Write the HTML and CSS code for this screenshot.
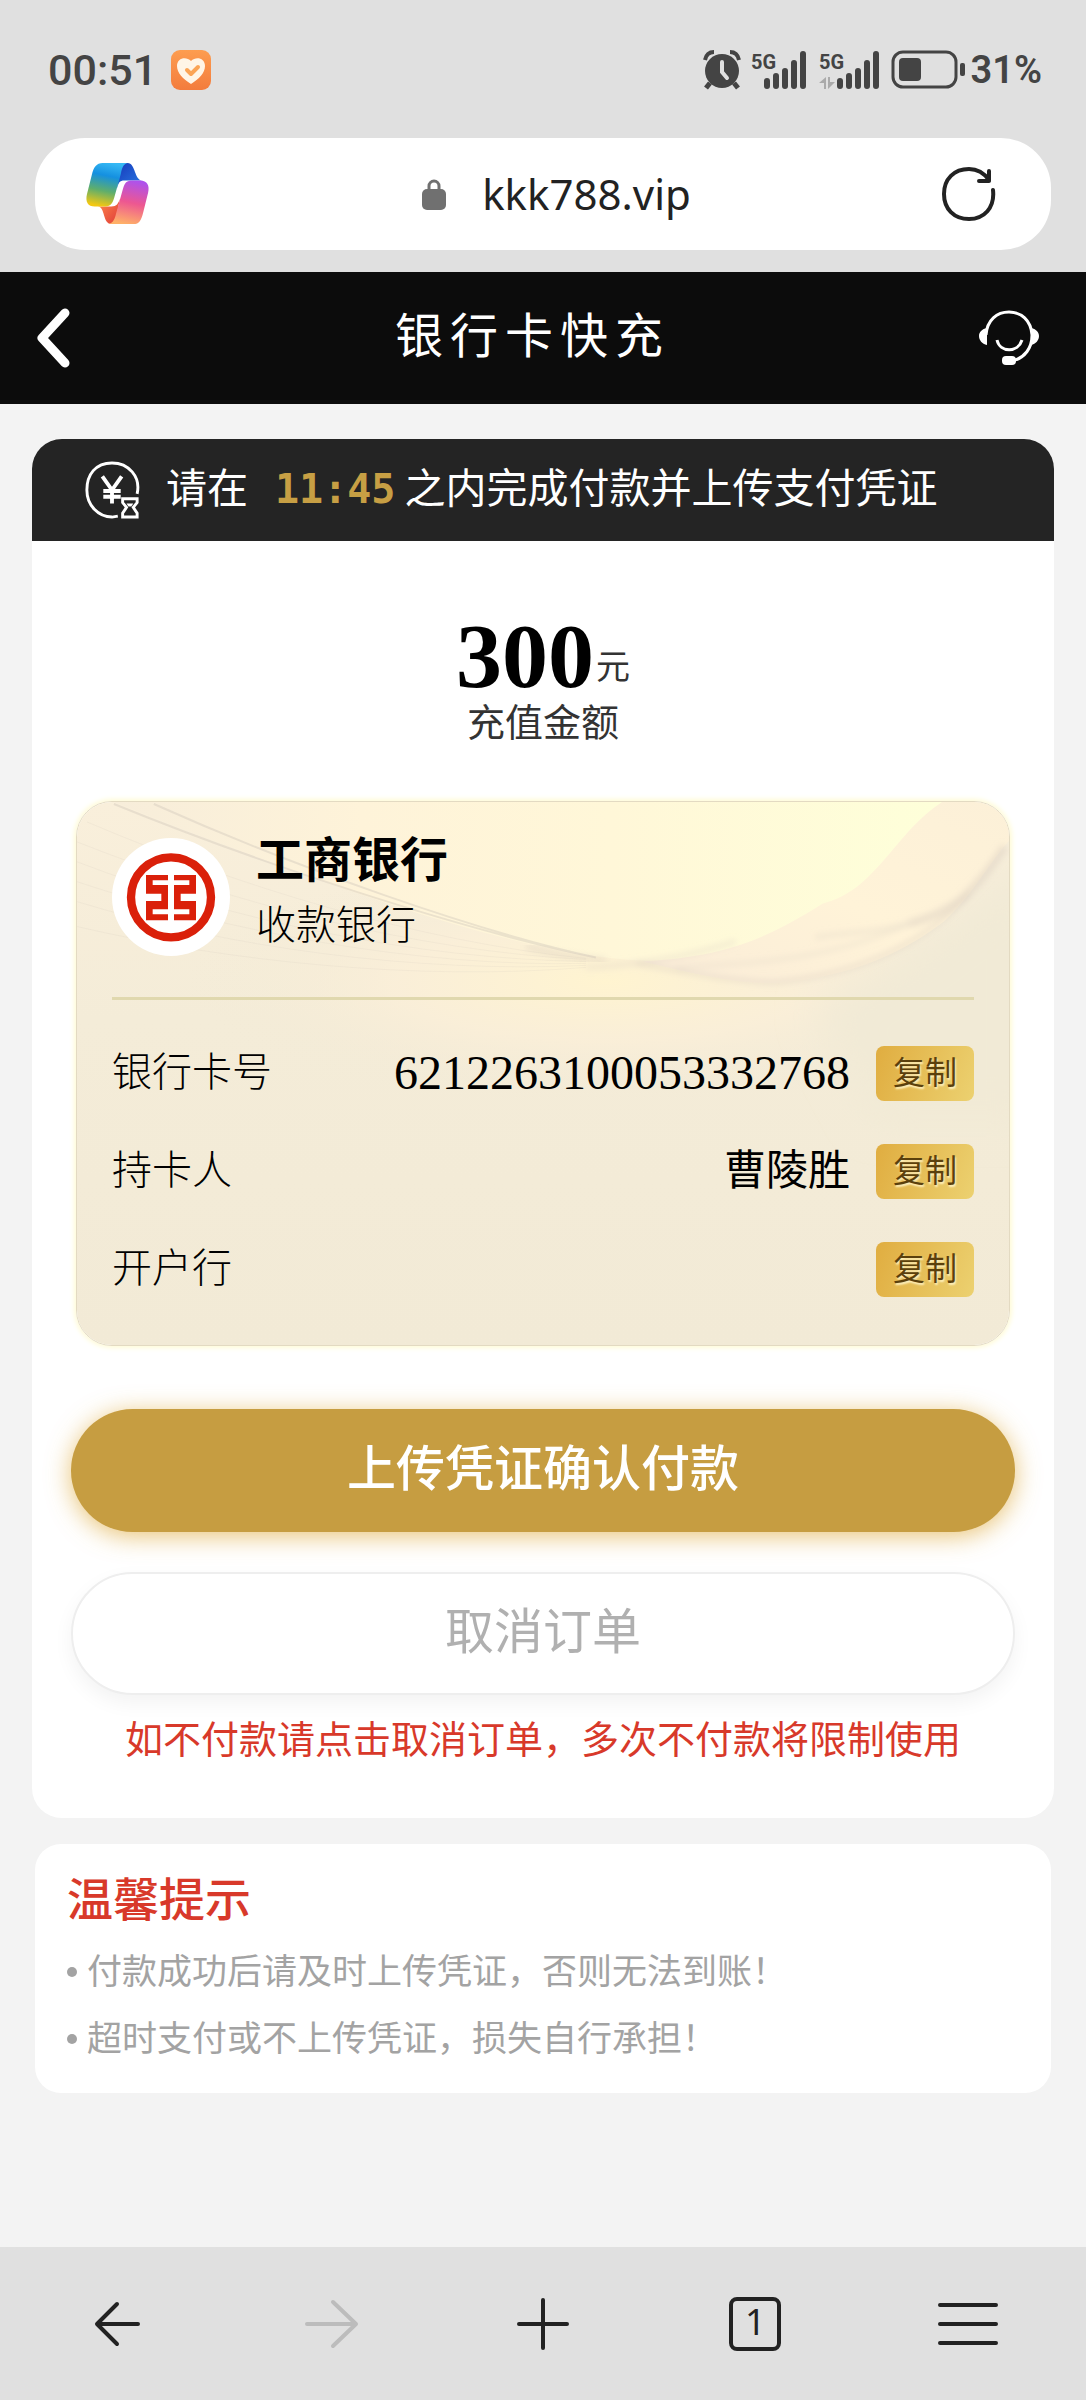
FILE: index.html
```html
<!DOCTYPE html>
<html lang="zh-CN">
<head>
<meta charset="utf-8">
<meta name="viewport" content="width=device-width, initial-scale=1">
<title>银行卡快充</title>
<link rel="stylesheet" href="styles.css">
</head>
<body>
<div class="chrome">
  <div class="status">
    <div class="status-side">
      <span class="clock">00:51</span>
      <svg width="40" height="40" viewBox="0 0 40 40" aria-hidden="true">
        <defs>
          <linearGradient id="app" x1="0" y1="0" x2="0" y2="1"><stop offset="0" stop-color="#fd9d50"/><stop offset="1" stop-color="#f37c3d"/></linearGradient>
        </defs>
        <rect width="40" height="40" rx="9" fill="url(#app)"/>
        <path d="M20 34C12 29 6 23 6 16c0-8 9-10 14-5 5-5 14-3 14 5 0 7-6 13-14 18z" fill="#fff5e6"/>
        <path d="M16 20l4 4 7-7" fill="none" stroke="#fba455" stroke-width="4" stroke-linecap="round" stroke-linejoin="round"/>
      </svg>
    </div>
    <div class="status-side status-right">
      <svg class="alarm" width="38" height="40" viewBox="0 0 38 40" aria-hidden="true">
        <circle cx="19" cy="21" r="17" fill="#444"/>
        <path d="M2 10C3 5 6 2 11 2M36 10C35 5 32 2 27 2" fill="none" stroke="#444" stroke-width="4"/>
        <path d="M7 33l-4 5M31 33l4 5" stroke="#444" stroke-width="5"/>
        <path d="M19 12v10l5 6" fill="none" stroke="#e0e0e0" stroke-width="4" stroke-linecap="round"/>
      </svg>
      <svg class="signal" width="58" height="40" viewBox="0 0 58 40" aria-hidden="true">
        <text x="0" y="19" class="net" fill="#444">5G</text>
        <path d="M16 31v5M25 26v10M34 21v15M43 13v23M52 4v32" stroke="#444" stroke-width="6" stroke-linecap="round"/>
      </svg>
      <svg class="signal" width="62" height="40" viewBox="0 0 62 40" aria-hidden="true">
        <text x="0" y="19" class="net" fill="#444">5G</text>
        <path d="M7 27v12H5v-6H0zM9 39V27h2v5h5z" fill="#aaa"/>
        <path d="M21 31v5M30 26v10M39 21v15M48 13v23M57 4v32" stroke="#444" stroke-width="6" stroke-linecap="round"/>
      </svg>
      <svg width="76" height="40" viewBox="0 0 76 40" aria-hidden="true">
        <rect x="2" y="2" width="63" height="35" rx="10" fill="none" stroke="#444" stroke-width="3"/>
        <rect x="8" y="8" width="22" height="23" rx="4" fill="#444"/>
        <rect x="69" y="13" width="5" height="13" rx="2" fill="#444"/>
      </svg>
      <span class="battery">31%</span>
    </div>
  </div>
  <div class="address">
    <svg width="66" height="62" viewBox="0 0 66 64" aria-hidden="true">
      <defs>
        <linearGradient id="c1" x1=".6" y1="0" x2=".4" y2="1"><stop offset="0" stop-color="#35b8f4"/><stop offset=".3" stop-color="#1590e0"/><stop offset=".65" stop-color="#5fae6c"/><stop offset="1" stop-color="#f3c812"/></linearGradient>
        <linearGradient id="c2" x1=".6" y1="0" x2=".4" y2="1"><stop offset="0" stop-color="#ae52ec"/><stop offset=".5" stop-color="#ed5791"/><stop offset="1" stop-color="#ffb168"/></linearGradient>
        <linearGradient id="c3" x1="0" y1="0" x2="1" y2="1"><stop offset="0" stop-color="#1639bb"/><stop offset="1" stop-color="#2a7be4"/></linearGradient>
        <linearGradient id="c4" x1="0" y1="0" x2="1" y2="1"><stop offset="0" stop-color="#ff8a4a"/><stop offset="1" stop-color="#df3a3a"/></linearGradient>
      </defs>
      <path d="M35 0h8c8 0 7 18 15 18H40c-6 0-6 2-8 8z" fill="url(#c3)"/>
      <path d="M30 63h-4c-9 0-6-18-14-18h14c6 0 7-3 9-8z" fill="url(#c4)"/>
      <path d="M17 0h26c-5 1-6 6-7 11l-7 25c-2 7-5 9-11 9H9c-7 0-10-5-8-13L6 12C8 4 11 0 17 0z" fill="url(#c1)"/>
      <path d="M49 63H23c5-1 7-6 8-11l7-25c2-7 4-9 10-9h8c7 0 10 5 8 13l-5 20c-2 8-4 12-10 12z" fill="url(#c2)"/>
    </svg>
    <div class="site">
      <svg width="24" height="31" viewBox="0 0 24 31" aria-hidden="true">
        <rect y="10" width="24" height="21" rx="5" fill="#707070"/>
        <path d="M7 12V7a5 5 0 0 1 10 0v5" fill="none" stroke="#707070" stroke-width="3"/>
      </svg>
      <span>kkk788.vip</span>
    </div>
    <button class="plain" aria-label="刷新">
      <svg width="54" height="54" viewBox="0 0 54 54" aria-hidden="true">
        <path d="M51 23C53 41 42 52 27 52S2 42 2 27 12 2 27 2c9 0 15 4 20 11" fill="none" stroke="#222" stroke-width="4" stroke-linecap="round"/>
        <path d="M47 4v10H37" fill="none" stroke="#222" stroke-width="4" stroke-linecap="round" stroke-linejoin="round"/>
      </svg>
    </button>
  </div>
</div>

<header class="topbar">
  <button class="plain" aria-label="返回">
    <svg width="34" height="60" viewBox="0 0 34 60" aria-hidden="true"><path d="M29 5L6 30l23 25" fill="none" stroke="#fff" stroke-width="9" stroke-linecap="round" stroke-linejoin="round"/></svg>
  </button>
  <h1 class="title">银行卡快充</h1>
  <button class="plain" aria-label="客服">
    <svg width="60" height="56" viewBox="0 0 60 56" aria-hidden="true">
      <path d="M7 25C8 10 18 2 30 2s22 8 23 23c0 13-7 23-20 26" fill="none" stroke="#fff" stroke-width="3"/>
      <path d="M8 18v17C3 34 0 30 0 26s3-7 8-8zM52 18v17c5-1 8-5 8-9s-3-7-8-8z" fill="#fff"/>
      <rect x="23" y="46" width="14" height="9" rx="4" fill="#fff"/>
      <path d="M18 30c3 13 21 13 25 0" fill="none" stroke="#fff" stroke-width="3"/>
    </svg>
  </button>
</header>

<main class="page">
  <section class="order">
    <div class="notice">
      <svg width="56" height="58" viewBox="0 0 56 60" aria-hidden="true">
        <path d="M54 34C58 16 45 2 28 2S2 14 2 30s12 28 26 28l6-1" fill="none" stroke="#fff" stroke-width="3"/>
        <path d="M18 16l10 14 10-14M28 30v14M19 31h18M19 37h18" fill="none" stroke="#fff" stroke-width="4"/>
        <path d="M39 39h15v4l-4 5 4 6v4H39v-4l4-6-4-5z" fill="none" stroke="#fff" stroke-width="3"/>
        <path d="M43 44h7l-2 3h-3z" fill="#fff"/>
      </svg>
      <p class="notice-text">请在<time class="countdown">11:45</time>之内完成付款并上传支付凭证</p>
    </div>

    <div class="order-body">
      <div class="amount">
        <p class="amount-value"><strong>300</strong><span>元</span></p>
        <p class="amount-label">充值金额</p>
      </div>

      <div class="bank">
        <svg class="bank-art" viewBox="0 0 934 545" preserveAspectRatio="none" aria-hidden="true">
          <defs>
            <linearGradient id="base" x1="0" y1="0" x2="0" y2="1"><stop offset="0" stop-color="#f9efdb"/><stop offset=".4" stop-color="#f4ecd8"/><stop offset="1" stop-color="#f2ead6"/></linearGradient>
            <linearGradient id="sky" x1="0" y1="0" x2="1" y2="0"><stop offset="0" stop-color="#f7edda"/><stop offset=".3" stop-color="#fef3d9"/><stop offset=".6" stop-color="#fff7d8"/><stop offset="1" stop-color="#feffd9"/></linearGradient>
            <linearGradient id="wing" x1="1" y1="0" x2="0" y2="1"><stop offset="0" stop-color="#fcf0d8"/><stop offset=".5" stop-color="#fff3d8"/><stop offset="1" stop-color="#faecd8"/></linearGradient>
            <radialGradient id="glow"><stop offset="0" stop-color="#fff4d0"/><stop offset=".5" stop-color="#fbefd8" stop-opacity=".8"/><stop offset="1" stop-color="#f2ead6" stop-opacity="0"/></radialGradient>
            <filter id="soft"><feGaussianBlur stdDeviation="3"/></filter>
            <filter id="softer" x="-50%" y="-50%" width="200%" height="200%"><feGaussianBlur stdDeviation="20"/></filter>
          </defs>
          <rect width="934" height="545" fill="url(#base)"/>
          <ellipse cx="530" cy="180" rx="420" ry="120" fill="url(#glow)"/>
          <path d="M740 206C800 180 890 120 960 39V320H800z" fill="#f1ead6" filter="url(#softer)"/>
          <path d="M37 0C240 80 440 155 567 159S747 120 810 62L867 0z" fill="url(#sky)"/>
          <path d="M867 0C820 30 800 90 747 102 690 138 650 155 567 160c50 12 90 22 133 22C780 175 830 150 870 119 900 90 915 60 934 39V0z" fill="url(#wing)"/>
          <g fill="none" stroke="#dccfc2" filter="url(#soft)">
            <path d="M930 45C900 90 880 110 834 122" stroke-width="8" opacity=".5"/>
            <path d="M834 122C800 132 770 130 740 136" stroke-width="5" opacity=".3"/>
            <path d="M895 92C850 140 790 172 700 181 650 180 610 170 560 162" stroke-width="4" opacity=".5"/>
            <path d="M600 166c90-4 160-10 234-44" stroke-width="4" opacity=".3"/>
            <path d="M510 166c50-2 100-10 150-26" stroke-width="4" opacity=".4"/>
          </g>
          <g fill="none" stroke="#cfc6ba" opacity=".4">
            <path d="M37 2C184 62 384 128 520 156M77 2C220 66 400 130 520 156" stroke-width="2"/>
            <path d="M10 20C160 84 340 140 510 157M0 40C150 100 340 150 510 158M0 60C150 118 340 158 510 160M0 80C150 130 340 166 510 162M0 100C150 146 340 172 510 164M0 125C150 160 340 180 510 166" stroke-width="1" opacity=".4"/>
          </g>
          <path d="M450 145c30 9 55 12 80 14" fill="none" stroke="#c9bdb2" stroke-width="4" opacity=".4" filter="url(#soft)"/>
        </svg>

        <div class="bank-head">
          <span class="bank-logo">
            <svg width="102" height="102" viewBox="0 0 306 306" aria-hidden="true">
              <circle cx="153" cy="154" r="120" fill="none" stroke="#da200a" stroke-width="25"/>
              <path d="M78 87h66v16H98v14h46v73H98v15h46v18H78v-58h46v-22H78zM228 87h-66v16h46v14h-46v73h46v15h-46v18h66v-58h-46v-22h46z" fill="#da200a"/>
            </svg>
          </span>
          <div>
            <h2 class="bank-name">工商银行</h2>
            <p class="bank-role">收款银行</p>
          </div>
        </div>

        <dl class="details">
          <div class="detail">
            <dt>银行卡号</dt>
            <dd><span class="number">6212263100053332768</span><button class="copy">复制</button></dd>
          </div>
          <div class="detail">
            <dt>持卡人</dt>
            <dd><span class="holder">曹陵胜</span><button class="copy">复制</button></dd>
          </div>
          <div class="detail">
            <dt>开户行</dt>
            <dd><button class="copy">复制</button></dd>
          </div>
        </dl>
      </div>

      <button class="action action-primary">上传凭证确认付款</button>
      <button class="action action-cancel">取消订单</button>
      <p class="warning">如不付款请点击取消订单，多次不付款将限制使用</p>
    </div>
  </section>

  <section class="tips">
    <h2 class="tips-title">温馨提示</h2>
    <ul class="tips-list">
      <li>付款成功后请及时上传凭证，否则无法到账！</li>
      <li>超时支付或不上传凭证，损失自行承担！</li>
    </ul>
  </section>
</main>

<nav class="toolbar">
  <button class="plain" aria-label="后退">
    <svg width="56" height="56" viewBox="0 0 56 56" aria-hidden="true"><path d="M48 28H8M27 8L7 28l20 20" fill="none" stroke="#222" stroke-width="4" stroke-linecap="round" stroke-linejoin="round"/></svg>
  </button>
  <button class="plain" aria-label="前进" disabled>
    <svg width="56" height="56" viewBox="0 0 56 56" aria-hidden="true"><path d="M4 28h48M30 6l23 22-23 22" fill="none" stroke="#bcbcbc" stroke-width="4" stroke-linecap="round" stroke-linejoin="round"/></svg>
  </button>
  <button class="plain" aria-label="新建标签页">
    <svg width="56" height="56" viewBox="0 0 56 56" aria-hidden="true"><path d="M28 4v48M4 28h48" stroke="#222" stroke-width="4" stroke-linecap="round"/></svg>
  </button>
  <button class="plain" aria-label="标签页"><span class="tab-count">1</span></button>
  <button class="plain" aria-label="菜单">
    <svg width="60" height="56" viewBox="0 0 60 56" aria-hidden="true"><path d="M2 9h56M2 28h56M2 47h56" stroke="#222" stroke-width="4" stroke-linecap="round"/></svg>
  </button>
</nav>
</body>
</html>
```
FILE: styles.css
```css
* {
  box-sizing: border-box;
}

body {
  margin: 0;
  min-height: 100vh;
  display: flex;
  flex-direction: column;
  background: #f3f3f3;
  color: #000;
  font-family: "Noto Sans CJK SC", sans-serif;
}

h1, h2, p, ul, dl, dd {
  margin: 0;
  padding: 0;
}

button {
  font-family: inherit;
  cursor: pointer;
}

svg {
  display: block;
  flex: none;
}

.plain {
  display: flex;
  align-items: center;
  justify-content: center;
  padding: 0;
  border: 0;
  background: none;
}

/* Browser chrome */
.chrome {
  background: #e0e0e0;
  padding: 46px 35px 22px;
}

.status {
  display: flex;
  justify-content: space-between;
  align-items: center;
  height: 48px;
  margin: 0 9px 44px 13px;
  color: #444;
  font-family: Roboto, "Noto Sans", sans-serif;
}

.status-side {
  display: flex;
  align-items: center;
  gap: 14px;
}

.status-right {
  gap: 0;
}

.alarm {
  margin-right: 10px;
}

.signal {
  margin-right: 10px;
}

.net {
  font: bold 20px Roboto, sans-serif;
}

.clock {
  font-size: 43px;
  font-weight: 500;
}

.battery {
  margin-left: 4px;
  font-size: 38px;
  font-weight: 600;
}

.address {
  display: flex;
  align-items: center;
  justify-content: space-between;
  height: 112px;
  padding: 0 55px 0 50px;
  border-radius: 50px;
  background: #fff;
}

.site {
  display: flex;
  align-items: center;
  gap: 36px;
  padding-left: 20px;
  color: #222;
  font: 42px/56px "Noto Sans", sans-serif;
}

/* Page header */
.topbar {
  display: flex;
  align-items: center;
  justify-content: space-between;
  height: 132px;
  padding: 0 47px 0 36px;
  background: #0c0c0c;
}

.title {
  padding: 0 0 12px 16px;
  color: #fff;
  font-size: 48px;
  font-weight: 400;
  line-height: 64px;
  letter-spacing: 7px;
}

/* Order card */
.page {
  flex: 1;
  padding: 35px 32px;
}

.order {
  border-radius: 30px;
  background: #fff;
  overflow: hidden;
}

.notice {
  display: flex;
  align-items: center;
  gap: 26px;
  height: 102px;
  padding: 0 52px;
  background: #242424;
  color: #fff;
}

.notice-text {
  padding-bottom: 6px;
  font-size: 41px;
  line-height: 56px;
  white-space: nowrap;
}

.countdown {
  padding: 0 9px 0 27px;
  color: #c79f44;
  font: bold 40px/56px "DejaVu Sans Mono", monospace;
}

.order-body {
  padding: 75px 39px 56px;
}

.amount {
  color: #333;
  text-align: center;
}

.amount-value {
  display: flex;
  align-items: flex-end;
  justify-content: center;
  gap: 2px;
  height: 80px;
  font-size: 34px;
  line-height: 62px;
}

.amount-value strong {
  color: #000;
  font: bold 92px/80px "Liberation Serif", serif;
}

.amount-label {
  font-size: 38px;
  line-height: 48px;
}

/* Bank card */
.bank {
  position: relative;
  isolation: isolate;
  margin: 57px 5px 63px;
  padding: 36px 35px 27px;
  border: 1px solid #e3dac2;
  border-radius: 36px;
  overflow: hidden;
  box-shadow: 0 0 5px 2px #fffbd6;
}

.bank-art {
  position: absolute;
  inset: 0;
  z-index: -1;
  width: 100%;
  height: 100%;
}

.bank-head {
  display: flex;
  align-items: flex-start;
  gap: 26px;
  padding-bottom: 41px;
  border-bottom: 3px solid #e0d8ae;
}

.bank-logo {
  display: grid;
  place-items: center;
  width: 118px;
  height: 118px;
  border-radius: 50%;
  background: #fff;
}

.bank-name {
  margin-bottom: 24px;
  font-size: 48px;
  font-weight: 700;
  line-height: 36px;
}

.bank-role {
  font-size: 40px;
  font-weight: 300;
  line-height: 48px;
}

.details {
  padding-top: 24px;
}

.detail {
  display: flex;
  align-items: center;
  justify-content: space-between;
  height: 98px;
}

.detail dt {
  padding-bottom: 8px;
  font-size: 40px;
  font-weight: 300;
}

.detail dd {
  display: flex;
  align-items: center;
  gap: 26px;
}

.number {
  font: 48px/56px "Liberation Serif", serif;
}

.holder {
  padding-bottom: 8px;
  font-size: 42px;
  line-height: 56px;
}

.copy {
  width: 98px;
  height: 55px;
  padding: 0 0 6px;
  border: 0;
  border-radius: 8px;
  background: linear-gradient(110deg, #e0ad40, #ecd170);
  color: #5b400c;
  font-size: 32px;
  line-height: 48px;
  text-shadow: 1px 2px 2px #fff3c4;
}

/* Actions */
.action {
  display: block;
  width: 100%;
  height: 123px;
  padding: 0 0 12px;
  border: 0;
  border-radius: 62px;
  font-size: 49px;
  line-height: 64px;
}

.action-primary {
  margin-bottom: 40px;
  background: #c69d41;
  color: #fff;
  font-weight: 500;
  box-shadow: 0 4px 24px rgba(222, 170, 60, .7);
}

.action-cancel {
  margin-bottom: 17px;
  border: 2px solid #eee;
  background: #fff;
  color: #b0b0b0;
  box-shadow: 0 8px 20px rgba(0, 0, 0, .05);
}

.warning {
  color: #d8392a;
  font-size: 38px;
  line-height: 50px;
  text-align: center;
  white-space: nowrap;
}

/* Tips */
.tips {
  margin: 26px 3px 0;
  padding: 24px 32px;
  border-radius: 26px;
  background: #fff;
}

.tips-title {
  margin-bottom: 11px;
  color: #d8392a;
  font-size: 46px;
  font-weight: 500;
  line-height: 56px;
}

.tips-list {
  list-style: none;
  color: #a3a3a3;
  font-size: 35px;
  line-height: 67px;
}

.tips-list li {
  display: flex;
  align-items: center;
  gap: 10px;
}

.tips-list li::before {
  content: "";
  width: 10px;
  height: 10px;
  margin-top: 6px;
  border-radius: 50%;
  background: #a3a3a3;
}

/* Browser toolbar */
.toolbar {
  display: grid;
  grid-template-columns: repeat(5, 1fr);
  align-items: center;
  height: 153px;
  padding: 0 12px;
  background: #e0e0e0;
}

.tab-count {
  width: 52px;
  height: 54px;
  border: 4px solid #222;
  border-radius: 8px;
  color: #222;
  font: 36px/42px "Noto Sans", sans-serif;
}
```
